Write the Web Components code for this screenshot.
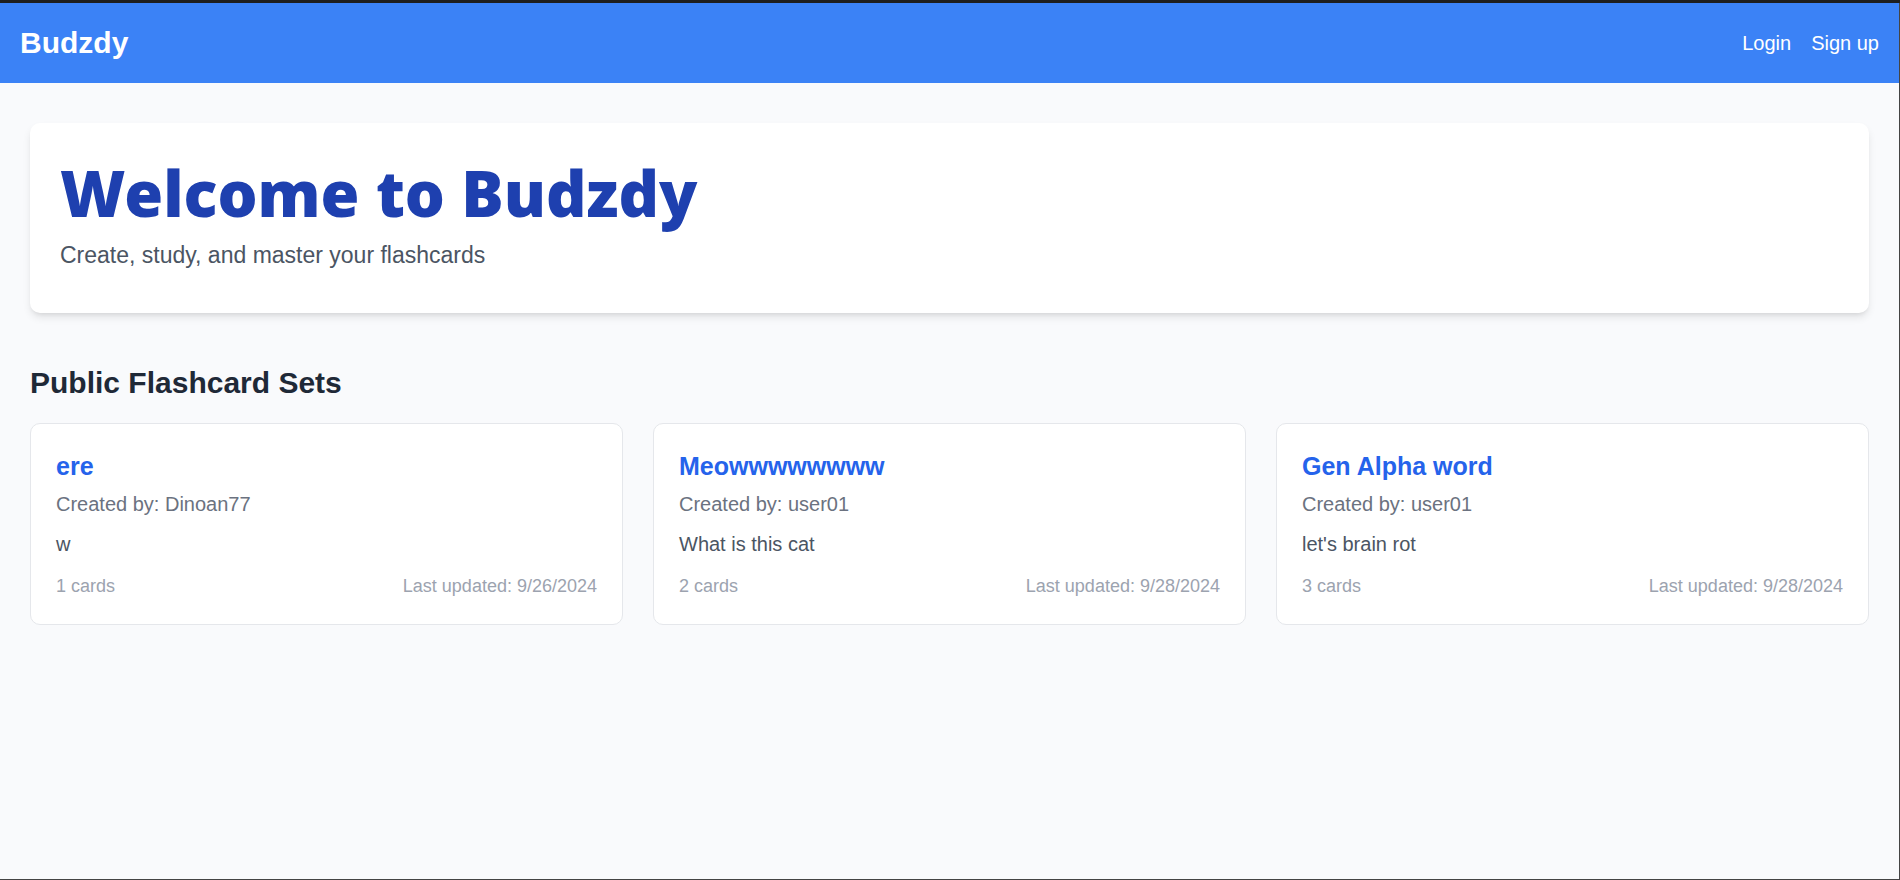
<!DOCTYPE html>
<html lang="en">
<head>
<meta charset="utf-8">
<meta name="viewport" content="width=device-width, initial-scale=1">
<title>Budzdy</title>
<style>
  body { margin: 0; font-family: "Liberation Sans", Arial, sans-serif; font-size: 20px; line-height: 30px; }
</style>
</head>
<body>
<budzdy-app></budzdy-app>

<script>
  const define = (name, html) => {
    const template = document.createElement('template');
    template.innerHTML = html;
    customElements.define(name, class extends HTMLElement {
      constructor() {
        super();
        this.attachShadow({ mode: 'open' }).append(template.content.cloneNode(true));
      }
    });
  };

  define('site-header', `
    <style>
      :host { display: block; background: #3b82f6; color: #fff; }
      header { display: flex; align-items: center; justify-content: space-between; min-height: 80px; padding: 0 20px; }
      a { color: inherit; text-decoration: none; }
      .brand { font-size: 30px; line-height: 40px; font-weight: 700; }
      nav { display: flex; gap: 20px; }
    </style>
    <header>
      <a class="brand" href="#"><slot name="brand"></slot></a>
      <nav><a href="#login">Login</a><a href="#signup">Sign up</a></nav>
    </header>`);

  define('hero-banner', `
    <style>
      :host { display: block; background: #fff; border-radius: 10px; padding: 40px 30px;
              box-shadow: 0 5px 8px -1px rgb(0 0 0 / .1), 0 3px 5px -3px rgb(0 0 0 / .1); }
      h1 { margin: 0 0 15px; font: 900 63px/60px "Noto Sans", "Open Sans", sans-serif; color: #1e40af; }
      p { margin: 0; font-size: 23px; line-height: 35px; color: #4b5563; }
    </style>
    <h1><slot name="title"></slot></h1>
    <p><slot></slot></p>`);

  define('set-list', `
    <style>
      :host { display: block; }
      h2 { margin: 0 0 20px; font-size: 30px; line-height: 40px; color: #1f2937; }
      .grid { display: grid; grid-template-columns: repeat(auto-fit, minmax(min(100%, 420px), 1fr)); gap: 30px; }
    </style>
    <h2><slot name="heading"></slot></h2>
    <div class="grid"><slot></slot></div>`);

  define('set-card', `
    <style>
      :host { display: block; background: #fff; border: 1px solid #e5e7eb; border-radius: 10px; padding: 25px; }
      h3 { margin: 0 0 5px; font-size: 25px; line-height: 35px; }
      a { color: #2563eb; text-decoration: none; }
      p { margin: 0; }
      .author { color: #6b7280; margin-bottom: 10px; }
      .text { color: #4b5563; margin-bottom: 15px; }
      footer { display: flex; justify-content: space-between; font-size: 18px; line-height: 25px; color: #9ca3af; }
    </style>
    <h3><a href="#set"><slot name="title"></slot></a></h3>
    <p class="author">Created by: <slot name="author"></slot></p>
    <p class="text"><slot></slot></p>
    <footer><span><slot name="count"></slot> cards</span><span>Last updated: <slot name="date"></slot></span></footer>`);

  define('budzdy-app', `
    <style>
      :host { display: block; box-sizing: border-box; min-height: 100vh; background: #f9fafc;
              border: solid #444; border-width: 0 1px 1px 0; }
      .edge { height: 3px; background: #1e1e1e; margin-right: -1px; }
      main { display: grid; gap: 50px; padding: 40px 30px; }
    </style>
    <div class="edge"></div>
    <site-header><span slot="brand">Budzdy</span></site-header>
    <main>
      <hero-banner><span slot="title">Welcome to Budzdy</span>Create, study, and master your flashcards</hero-banner>
      <set-list>
        <span slot="heading">Public Flashcard Sets</span>
        <set-card><span slot="title">ere</span><span slot="author">Dinoan77</span>w<span slot="count">1</span><span slot="date">9/26/2024</span></set-card>
        <set-card><span slot="title">Meowwwwwwww</span><span slot="author">user01</span>What is this cat<span slot="count">2</span><span slot="date">9/28/2024</span></set-card>
        <set-card><span slot="title">Gen Alpha word</span><span slot="author">user01</span>let's brain rot<span slot="count">3</span><span slot="date">9/28/2024</span></set-card>
      </set-list>
    </main>`);
</script>
</body>
</html>
